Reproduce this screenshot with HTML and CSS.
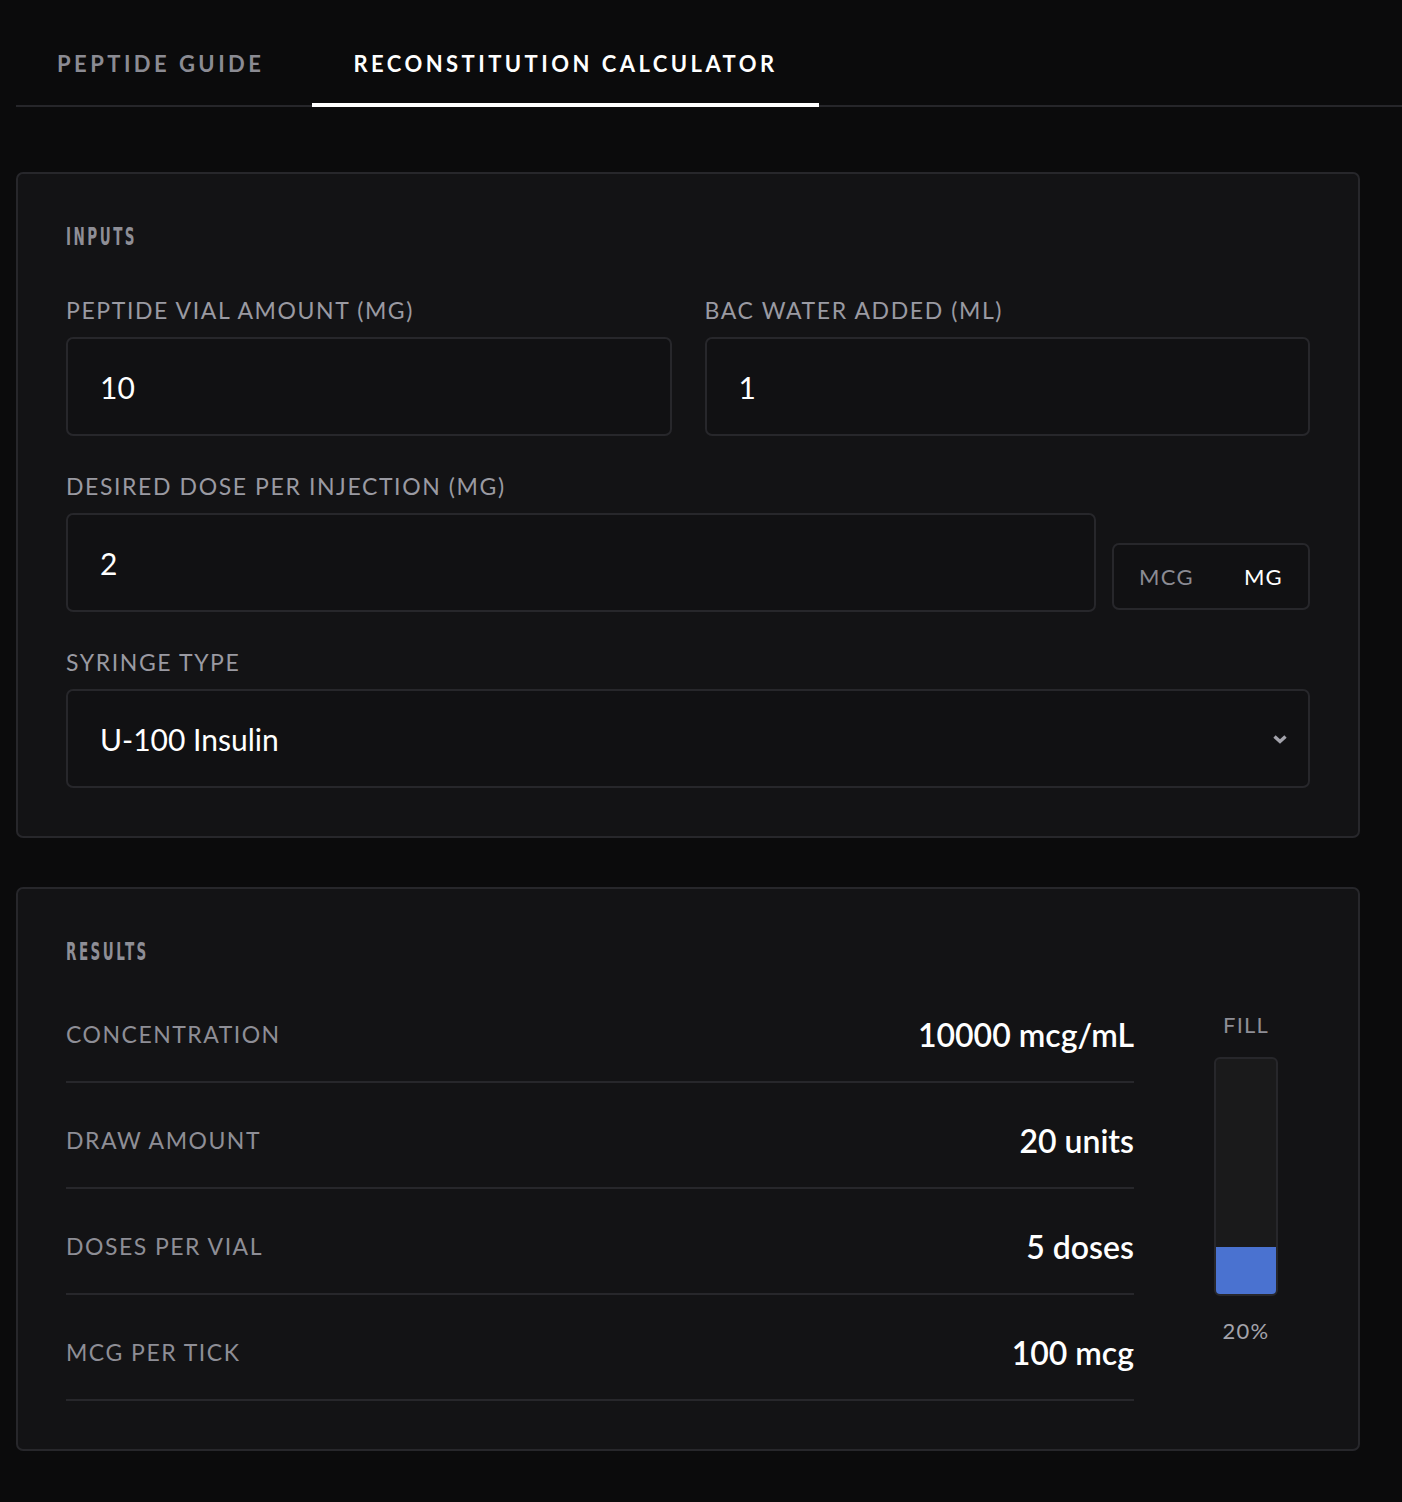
FILE: index.html
```html
<!DOCTYPE html>
<html>
	<head>
		<meta charset="UTF-8">
		<title>Reconstitution Calculator</title>
		<link rel="stylesheet" href="styles.css">
	</head>
	<body>

		<!--tabs-->
		<div class="tabs">
			<a class="tab" href="javascript:;">Peptide Guide</a>
			<a class="tab active" href="javascript:;">Reconstitution Calculator</a>
		</div>

		<div class="page">

			<!--inputs-->
			<div class="card">
				<h2 class="card-title"><span>Inputs</span></h2>

				<div class="row-2">
					<div class="field">
						<label class="label" for="vial">Peptide Vial Amount (mg)</label>
						<input class="input" id="vial" type="text" value="10">
					</div>
					<div class="field">
						<label class="label" for="water">BAC Water Added (mL)</label>
						<input class="input" id="water" type="text" value="1">
					</div>
				</div>

				<div class="field">
					<label class="label" for="dose">Desired Dose Per Injection (mg)</label>
					<div class="dose-row">
						<input class="input" id="dose" type="text" value="2">
						<div class="unit-toggle">
							<a class="unit" href="javascript:;">mcg</a>
							<a class="unit on" href="javascript:;">mg</a>
						</div>
					</div>
				</div>

				<div class="field">
					<label class="label" for="syringe">Syringe Type</label>
					<div class="select-wrap">
						<select class="input select" id="syringe">
							<option>U-100 Insulin</option>
							<option>U-40 Insulin</option>
							<option>1 mL Tuberculin</option>
						</select>
						<svg class="chevron" width="16" height="11" viewBox="0 0 16 11">
							<path d="M2.5 2.5 L8 7.5 L13.5 2.5" fill="none" stroke="#a3a3ab" stroke-width="3.4"/>
						</svg>
					</div>
				</div>
			</div>

			<!--results-->
			<div class="card">
				<h2 class="card-title"><span>Results</span></h2>

				<div class="results">
					<div class="result-list">
						<div class="result">
							<span class="result-name">Concentration</span>
							<span class="result-value">10000 mcg/mL</span>
						</div>
						<div class="result">
							<span class="result-name">Draw Amount</span>
							<span class="result-value">20 units</span>
						</div>
						<div class="result">
							<span class="result-name">Doses Per Vial</span>
							<span class="result-value">5 doses</span>
						</div>
						<div class="result">
							<span class="result-name">mcg Per Tick</span>
							<span class="result-value">100 mcg</span>
						</div>
					</div>

					<div class="fill">
						<div class="fill-label">Fill</div>
						<div class="fill-bar">
							<div class="fill-level" style="height: 20%;"></div>
						</div>
						<div class="fill-pct">20%</div>
					</div>
				</div>
			</div>

		</div>

	</body>
</html>
```

FILE: styles.css
```css
*{
	margin: 0;
	padding: 0;
	box-sizing: border-box;
}

body{
	background-color: #0b0b0c;
	color: #fff;
	font-family: Lato, "Noto Sans", sans-serif;
	padding-left: 16px;
}

/*tabs*/
.tabs{
	display: flex;
	gap: 7px;
	padding-top: 20px;
	border-bottom: 2px solid #26262a;
}

.tab{
	display: block;
	height: 87px;
	line-height: 88px;
	padding: 0 41px 0 41px;
	margin-bottom: -2px;
	font-size: 22px;
	font-weight: 700;
	letter-spacing: 3.45px;
	text-transform: uppercase;
	text-decoration: none;
	color: #8b8b93;
	border-bottom: 4px solid transparent;
}

.tab.active{
	color: #fff;
	border-bottom-color: #fff;
}

.page{
	width: 1344px;
	padding: 65px 0 52px;
	display: flex;
	flex-direction: column;
	gap: 49px;
}

/*cards*/
.card{
	background-color: #131315;
	border: 2px solid #27272b;
	border-radius: 7px;
	padding: 48px;
	display: flex;
	flex-direction: column;
	gap: 34px;
}

/*condensed heading: squeeze the span sideways*/
.card-title{
	font-family: "DejaVu Sans Condensed", "DejaVu Sans", sans-serif;
	font-stretch: condensed;
	font-size: 24px;
	line-height: 25px;
	font-weight: 700;
	text-transform: uppercase;
	color: #8e8e96;
	margin-top: 3px;
	margin-bottom: 10px;
}

.card-title span{
	display: inline-block;
	letter-spacing: 4px;
	transform: scaleX(0.625);
	transform-origin: left center;
}

.row-2{
	display: grid;
	grid-template-columns: 1fr 1fr;
	gap: 33px;
}

.field{
	display: flex;
	flex-direction: column;
	gap: 15px;
}

.label{
	font-size: 23px;
	line-height: 28px;
	letter-spacing: 1.6px;
	text-transform: uppercase;
	color: #9a9aa2;
	margin-top: 2px;
	margin-bottom: -2px;
}

.input{
	width: 100%;
	height: 99px;
	padding: 0 32px;
	background-color: #111113;
	border: 2px solid #27272b;
	border-radius: 7px;
	font-family: Lato, "Noto Sans", sans-serif;
	font-size: 30px;
	color: #fff;
	outline: none;
}

.dose-row{
	display: flex;
	align-items: flex-end;
	gap: 16px;
}

.unit-toggle{
	flex: none;
	display: flex;
	height: 67px;
	margin-bottom: 2px;
	border: 2px solid #27272b;
	border-radius: 7px;
	background-color: #111113;
}

.unit{
	display: block;
	padding: 0 25px;
	line-height: 63px;
	font-size: 22px;
	letter-spacing: 1.3px;
	text-transform: uppercase;
	text-decoration: none;
	color: #8b8b93;
}

.unit.on{
	color: #fff;
}

.select-wrap{
	position: relative;
}

.select{
	appearance: none;
	-webkit-appearance: none;
}

/*chevron over the select*/
.chevron{
	position: absolute;
	right: 22px;
	top: 45px;
	pointer-events: none;
}

/*results*/
.results{
	display: flex;
	gap: 48px;
	margin-top: -32px;
}

.result-list{
	flex: 1;
}

.result{
	height: 106px;
	padding-top: 10px;
	display: flex;
	align-items: center;
	justify-content: space-between;
	border-bottom: 2px solid #27272b;
}

.result-name{
	font-size: 23px;
	letter-spacing: 1.5px;
	text-transform: uppercase;
	color: #8e8e96;
}

.result-value{
	font-size: 32px;
	font-weight: 600;
	color: #fff;
}

.fill{
	flex: none;
	width: 128px;
	padding-top: 34px;
	display: flex;
	flex-direction: column;
	align-items: center;
	gap: 18px;
}

.fill-label,
.fill-pct{
	font-size: 22px;
	line-height: 28px;
	letter-spacing: 1.2px;
	text-transform: uppercase;
	color: #8e8e96;
}

.fill-pct{
	color: #a3a3ab;
	margin-top: 3px;
}

.fill-bar{
	width: 64px;
	height: 239px;
	border: 2px solid #27272b;
	border-radius: 6px;
	background-color: #1a1a1b;
	display: flex;
	align-items: flex-end;
	overflow: hidden;
}

.fill-level{
	width: 100%;
	background-color: #4a72d0;
}
```
